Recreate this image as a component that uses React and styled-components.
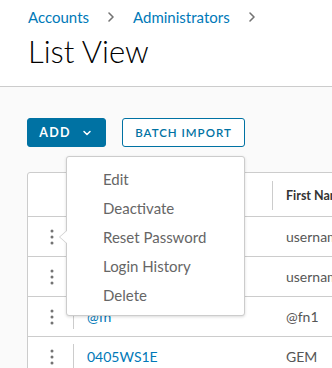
import React from 'react';
import styled, { createGlobalStyle } from 'styled-components';

const GlobalStyle = createGlobalStyle`
  html, body {
    margin: 0;
    padding: 0;
    overflow: hidden;
    background: #fafafa;
  }
  body {
    font-family: Lato, "Open Sans", sans-serif;
    color: #565656;
  }
`;

const Page = styled.div`
  width: 332px;
  height: 368px;
  overflow: hidden;
  background: #fafafa;
`;

const Header = styled.header`
  height: 87px;
  box-sizing: border-box;
  padding: 7px 0 0 28px;
  background: #fff;
  border-bottom: 1px solid #ccc;
`;

const Crumbs = styled.nav`
  display: flex;
  align-items: center;
  gap: 16px;
  height: 20px;
`;

const Crumb = styled.a`
  font-size: 15px;
  color: #0079b8;
  text-decoration: none;
`;

const Title = styled.h1`
  margin: 5px 0 0;
  font-size: 31px;
  font-weight: 300;
  color: #000;
  line-height: 38px;
`;

const Content = styled.main`
  padding: 31px 0 0 27px;
`;

const Toolbar = styled.div`
  display: flex;
  gap: 16px;
`;

const Button = styled.button`
  display: flex;
  align-items: center;
  justify-content: center;
  gap: 11px;
  height: 29px;
  width: ${(p) => p.$w}px;
  box-sizing: border-box;
  padding: 0 ${(p) => (p.$primary ? '2px' : '0')} 0 0;
  border: 1px solid #0072a3;
  border-radius: 3px;
  background: ${(p) => (p.$primary ? '#0072a3' : '#fff')};
  color: ${(p) => (p.$primary ? '#fff' : '#0072a3')};
  font-family: Lato, sans-serif;
  font-size: ${(p) => (p.$primary ? '12.5px' : '11.5px')};
  font-weight: ${(p) => (p.$primary ? 700 : 600)};
  letter-spacing: ${(p) => (p.$primary ? '1.3px' : '1px')};
  white-space: nowrap;
`;

const GridWrap = styled.div`
  position: relative;
  margin-top: 25px;
  width: 500px;
`;

const Grid = styled.div`
  background: #fff;
  border: 1px solid #ccc;
  border-radius: 3px 3px 0 0;
`;

const Row = styled.div`
  display: grid;
  grid-template-columns: 45px 199px 1fr;
  height: ${(p) => (p.$head ? 43 : 39)}px;
  border-bottom: 1px solid #ccc;
`;

const ActionCell = styled.div`
  display: flex;
  align-items: center;
  justify-content: center;
  padding-left: 2px;
`;

const Cell = styled.div`
  display: flex;
  align-items: center;
  padding: ${(p) => (p.$head ? '8px 0 6px' : '7px 0')};
`;

const CellInner = styled.div`
  display: flex;
  align-items: center;
  height: 100%;
  box-sizing: border-box;
  padding-left: 13px;
  border-left: ${(p) => (p.$line ? '1px solid #ccc' : '1px solid transparent')};
  font-size: ${(p) => (p.$head ? '12.5px' : '14px')};
  font-weight: ${(p) => (p.$head ? 700 : 400)};
  color: ${(p) => (p.$link ? '#0079b8' : p.$head ? '#333' : '#565656')};
  white-space: nowrap;
`;

const Menu = styled.div`
  position: absolute;
  top: -16px;
  left: 39px;
  width: 179px;
  box-sizing: border-box;
  padding: 7px 0 6px;
  background: #fff;
  border: 1px solid #ccc;
  border-radius: 3px;
  box-shadow: 0 1px 3px rgba(0, 0, 0, 0.15);

  &::before,
  &::after {
    content: '';
    position: absolute;
    top: 73px;
    border-style: solid;
    border-color: transparent;
    border-width: 7px 8px 7px 0;
  }
  &::before {
    left: -8px;
    border-right-color: #ccc;
  }
  &::after {
    left: -7px;
    border-right-color: #fff;
  }
`;

const MenuItem = styled.div`
  height: 29px;
  display: flex;
  align-items: center;
  padding-left: 36px;
  font-size: 15px;
  color: #666;
`;

const Chevron = ({ color = '#737373', size = 12 }) => (
  <svg width={size} height={size} viewBox="0 0 12 12" fill="none">
    <path d="M4 2l4 4-4 4" stroke={color} strokeWidth="1.6" strokeLinecap="round" strokeLinejoin="round" />
  </svg>
);

const Down = () => (
  <svg width="10" height="10" viewBox="0 0 10 10" fill="none">
    <path d="M2 3.5l3 3 3-3" stroke="#fff" strokeWidth="1.5" strokeLinecap="round" strokeLinejoin="round" />
  </svg>
);

const Kebab = () => (
  <svg width="4" height="16" viewBox="0 0 4 16">
    <circle cx="2" cy="2" r="1.5" fill="#737373" />
    <circle cx="2" cy="8" r="1.5" fill="#737373" />
    <circle cx="2" cy="14" r="1.5" fill="#737373" />
  </svg>
);

const rows = [
  { user: 'username1', first: 'username1' },
  { user: 'username2', first: 'username2' },
  { user: '@fn', first: '@fn1' },
  { user: '0405WS1E', first: 'GEM' },
];

const menuItems = ['Edit', 'Deactivate', 'Reset Password', 'Login History', 'Delete'];

export default function App() {
  return (
    <Page>
      <GlobalStyle />
      <Header>
        <Crumbs>
          <Crumb href="#">Accounts</Crumb>
          <Chevron />
          <Crumb href="#">Administrators</Crumb>
          <Chevron />
        </Crumbs>
        <Title>List View</Title>
      </Header>
      <Content>
        <Toolbar>
          <Button $primary $w={79}>
            ADD <Down />
          </Button>
          <Button $w={123}>BATCH IMPORT</Button>
        </Toolbar>
        <GridWrap>
          <Grid>
            <Row $head>
              <ActionCell />
              <Cell $head>
                <CellInner $head $line>User Name</CellInner>
              </Cell>
              <Cell $head>
                <CellInner $head $line>First Name</CellInner>
              </Cell>
            </Row>
            {rows.map((r) => (
              <Row key={r.user}>
                <ActionCell>
                  <Kebab />
                </ActionCell>
                <Cell>
                  <CellInner $line $link>{r.user}</CellInner>
                </Cell>
                <Cell>
                  <CellInner>{r.first}</CellInner>
                </Cell>
              </Row>
            ))}
          </Grid>
          <Menu>
            {menuItems.map((m) => (
              <MenuItem key={m}>{m}</MenuItem>
            ))}
          </Menu>
        </GridWrap>
      </Content>
    </Page>
  );
}
